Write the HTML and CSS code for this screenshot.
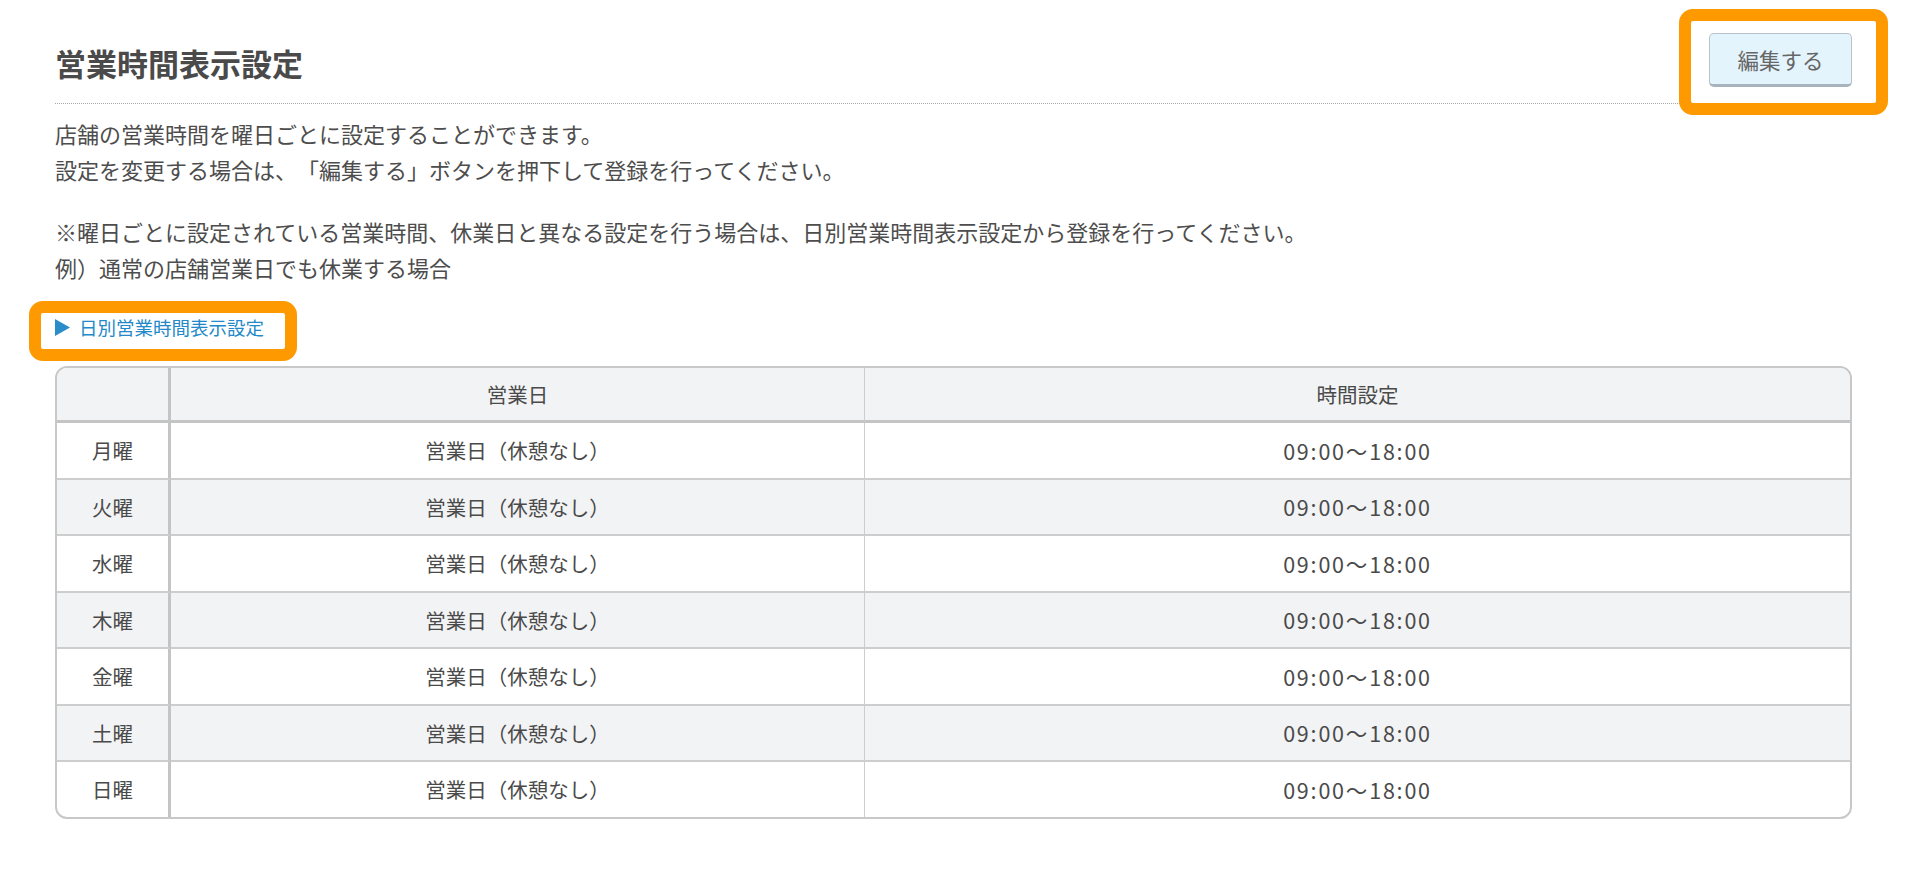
FILE: index.html
```html
<!DOCTYPE html>
<html lang="ja">
<head>
<meta charset="utf-8">
<title>営業時間表示設定</title>
<link rel="stylesheet" href="styles.css">
</head>
<body>
<div class="page">
  <div class="head">
    <h1 class="title">営業時間表示設定</h1>
    <div class="edit-wrap">
      <button class="edit-btn" type="button">編集する</button>
      <span class="mark mark-btn"></span>
    </div>
  </div>

  <div class="desc">
    <p>店舗の営業時間を曜日ごとに設定することができます。<br>設定を変更する場合は、「編集する」ボタンを押下して登録を行ってください。</p>
    <p>※曜日ごとに設定されている営業時間、休業日と異なる設定を行う場合は、日別営業時間表示設定から登録を行ってください。<br>例）通常の店舗営業日でも休業する場合</p>
  </div>

  <div class="link-row">
    <a class="day-link" href="#">
      <svg class="tri" width="15" height="17" viewBox="0 0 15 17"><polygon points="0,0 15,8.5 0,17" fill="#2a8dc9"/></svg>
      <span>日別営業時間表示設定</span>
      <span class="mark mark-link"></span>
    </a>
  </div>

  <div class="table-wrap">
    <table class="hours">
      <thead>
        <tr><th class="c-day"></th><th class="c-kind">営業日</th><th class="c-time">時間設定</th></tr>
      </thead>
      <tbody>
        <tr><td>月曜</td><td>営業日（休憩なし）</td><td class="time">09:00〜18:00</td></tr>
        <tr class="alt"><td>火曜</td><td>営業日（休憩なし）</td><td class="time">09:00〜18:00</td></tr>
        <tr><td>水曜</td><td>営業日（休憩なし）</td><td class="time">09:00〜18:00</td></tr>
        <tr class="alt"><td>木曜</td><td>営業日（休憩なし）</td><td class="time">09:00〜18:00</td></tr>
        <tr><td>金曜</td><td>営業日（休憩なし）</td><td class="time">09:00〜18:00</td></tr>
        <tr class="alt"><td>土曜</td><td>営業日（休憩なし）</td><td class="time">09:00〜18:00</td></tr>
        <tr><td>日曜</td><td>営業日（休憩なし）</td><td class="time">09:00〜18:00</td></tr>
      </tbody>
    </table>
  </div>
</div>
</body>
</html>
```

FILE: styles.css
```css
html, body {
  margin: 0;
  padding: 0;
  background: #ffffff;
}

body {
  font-family: "Noto Sans CJK JP", "Noto Sans", sans-serif;
  color: #4d4d4d;
  text-spacing-trim: space-all;
}

.page {
  padding: 0 68px 40px 55px;
}

/* ---------- header ---------- */
.head {
  display: flex;
  justify-content: space-between;
  align-items: flex-start;
  padding-top: 33px;
  padding-bottom: 16px;
  border-bottom: 1px dotted #a8a8a8;
}

.title {
  margin: 8px 0 0 0;
  font-size: 31px;
  line-height: 43px;
  font-weight: 700;
  color: #4a4a4a;
}

.edit-wrap {
  position: relative;
  display: flex;
}

.edit-btn {
  width: 143px;
  height: 54px;
  box-sizing: border-box;
  margin: 0;
  padding: 0;
  font-family: "Noto Sans CJK JP", "Noto Sans", sans-serif;
  font-size: 21.5px;
  color: #666666;
  background: #e4f4fd;
  border: 1px solid #b7c2ca;
  border-bottom: 3px solid #a8b4bd;
  border-radius: 5px;
}

/* orange annotation frames */
.mark {
  position: absolute;
  border: 12px solid #ff9900;
  border-radius: 14px;
  pointer-events: none;
}

.mark-btn {
  left: -30px;
  right: -36px;
  top: -24px;
  bottom: -28px;
}

/* ---------- description ---------- */
.desc p {
  margin: 12px 0 0 0;
  font-size: 22px;
  line-height: 35.5px;
  color: #4d4d4d;
}

.desc p + p {
  margin-top: 27px;
}

/* ---------- link ---------- */
.link-row {
  margin-top: 29px;
  display: flex;
}

.day-link {
  position: relative;
  display: inline-flex;
  align-items: center;
  gap: 9px;
  font-size: 18.5px;
  line-height: 26px;
  color: #2389c8;
  text-decoration: none;
}

.tri {
  display: block;
}

.mark-link {
  left: -26px;
  right: -33px;
  top: -13px;
  bottom: -21px;
}

/* ---------- table ---------- */
.table-wrap {
  margin-top: 26px;
  border: 2px solid #c8c8c8;
  border-radius: 12px;
  overflow: hidden;
}

.hours {
  width: 100%;
  table-layout: fixed;
  border-collapse: separate;
  border-spacing: 0;
  font-size: 20.5px;
  color: #4a4a4a;
}

.hours th,
.hours td {
  padding: 0;
  text-align: center;
  vertical-align: middle;
  font-weight: 400;
  box-sizing: border-box;
}

.hours th {
  height: 55px;
  background: #f2f3f5;
  border-bottom: 3px solid #c4c4c4;
}

.hours td {
  height: 56.5px;
  border-bottom: 2px solid #cdcdcd;
}

.hours tbody tr:last-child td {
  height: 54.5px;
  border-bottom: 0;
}

.hours th:first-child,
.hours td:first-child {
  border-right: 3px solid #c4c4c4;
}

.hours th:nth-child(2),
.hours td:nth-child(2) {
  border-right: 1px solid #cdcdcd;
}

.c-day {
  width: 114px;
}

.c-kind {
  width: 694px;
}

.hours tr.alt td {
  background: #f2f3f5;
}

.hours td.time {
  font-size: 21.5px;
  letter-spacing: 1.8px;
}
```
